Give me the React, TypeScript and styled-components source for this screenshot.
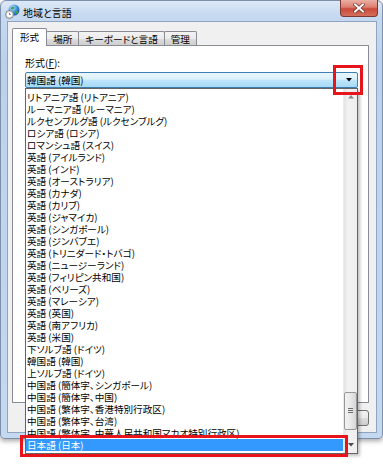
import React from 'react';
import styled, { createGlobalStyle } from 'styled-components';

const GlobalStyle = createGlobalStyle`
  html, body {
    margin: 0;
    padding: 0;
    background: #ffffff;
  }
  body {
    font-family: "Noto Sans CJK JP", "Noto Sans", sans-serif;
    font-feature-settings: "palt";
    color: #000;
  }
`;

const Page = styled.div`
  position: relative;
  width: 383px;
  height: 464px;
  overflow: hidden;
  background: #fff;
`;

const Window = styled.div`
  width: 383px;
  height: 439px;
  box-sizing: border-box;
  border: 1px solid #7d90ab;
  border-radius: 6px 6px 4px 4px;
  background: linear-gradient(180deg, #dce8f6 0px, #c6d9f0 14px, #bcd2ec 60px, #c4d8ef 100%);
  box-shadow: 0 2px 5px rgba(0, 0, 0, 0.35);
  display: flex;
  flex-direction: column;
`;

const TitleBar = styled.div`
  height: 20px;
  display: flex;
  align-items: center;
  padding-left: 4px;
  gap: 3px;
`;

const Title = styled.span`
  font-size: 10px;
  line-height: 12px;
  margin-top: 3px;
`;

const CloseButton = styled.div`
  margin-left: auto;
  margin-right: 4px;
  align-self: flex-start;
  margin-top: -1px;
  width: 38px;
  height: 17px;
  box-sizing: border-box;
  border: 1px solid #7a3a32;
  border-top: none;
  border-radius: 0 0 4px 4px;
  background: linear-gradient(180deg, #eab0a4 0%, #dc7d6f 45%, #c9493a 55%, #d4705c 100%);
  display: flex;
  align-items: center;
  justify-content: center;
`;

const Client = styled.div`
  flex: 1;
  margin: 0 5px 5px 6px;
  border: 1px solid #8fa4c2;
  background: #f0f0f0;
  padding: 6px 7px 0 4px;
  display: flex;
  flex-direction: column;
`;

const TabRow = styled.div`
  display: flex;
  align-items: flex-end;
  height: 18px;
  margin-bottom: -1px;
  position: relative;
  z-index: 1;
`;

const Tab = styled.div<{ $active?: boolean }>`
  box-sizing: border-box;
  font-size: 9.6px;
  line-height: 12px;
  white-space: nowrap;
  border: 1px solid #898c95;
  border-bottom: none;
  border-radius: 2px 2px 0 0;
  margin-left: ${(p) => (p.$active ? '0' : '-1px')};
  height: ${(p) => (p.$active ? '18px' : '14px')};
  margin-bottom: ${(p) => (p.$active ? '0' : '1px')};
  padding: ${(p) => (p.$active ? '2px 7px 0' : '1px 6px 0')};
  background: ${(p) =>
    p.$active ? '#ffffff' : 'linear-gradient(180deg, #f3f3f3 0%, #ebebeb 50%, #dddddd 51%, #cfcfcf 100%)'};
  position: relative;
  z-index: ${(p) => (p.$active ? 2 : 1)};
  &:first-child {
    margin-left: 0;
  }
`;

const Panel = styled.div`
  height: 358px;
  box-sizing: border-box;
  border: 1px solid #898c95;
  background: #ffffff;
  padding: 11px 11px 0 12px;
`;

const Label = styled.div`
  font-size: 10px;
  line-height: 12px;
  height: 12px;
  margin-bottom: 3px;
  u {
    text-decoration: underline;
  }
`;

const ComboWrap = styled.div`
  position: relative;
  width: 333px;
  height: 16px;
`;

const Combo = styled.div`
  height: 16px;
  box-sizing: border-box;
  border: 1px solid #3c7fb1;
  border-radius: 2px;
  background: linear-gradient(180deg, #eaf6fd 0%, #d9f0fc 45%, #bee6fd 50%, #a7d9f5 100%);
  display: flex;
  align-items: center;
  padding-left: 1px;
  font-size: 9.6px;
  line-height: 12px;
`;

const ComboArrow = styled.div`
  margin-left: auto;
  width: 17px;
  height: 100%;
  display: flex;
  align-items: center;
  justify-content: center;
`;

const DropList = styled.div`
  position: absolute;
  top: 16px;
  left: 0;
  width: 333px;
  height: 366px;
  box-sizing: border-box;
  border: 1px solid #646464;
  background: #ffffff;
  display: flex;
  z-index: 5;
  box-shadow: 2px 2px 3px rgba(0, 0, 0, 0.25);
`;

const Items = styled.div`
  flex: 1;
  padding-top: 2px;
  overflow: hidden;
`;

const Item = styled.div<{ $selected?: boolean }>`
  height: 12px;
  line-height: 12px;
  padding-left: 1px;
  font-size: 9.6px;
  white-space: nowrap;
  overflow: hidden;
  background: ${(p) => (p.$selected ? '#3399ff' : 'transparent')};
  color: ${(p) => (p.$selected ? '#ffffff' : '#000000')};
`;

const ScrollBar = styled.div`
  width: 13px;
  display: flex;
  flex-direction: column;
  background: linear-gradient(90deg, #e3e3e3 0%, #f2f2f2 30%, #eeeeee 100%);
  border-left: 1px solid #ececec;
`;

const ScrollArrow = styled.div`
  height: 16px;
  display: flex;
  align-items: center;
  justify-content: center;
`;

const Track = styled.div`
  flex: 1;
  display: flex;
  flex-direction: column;
  justify-content: flex-end;
  padding-bottom: 7px;
`;

const Thumb = styled.div`
  height: 38px;
  box-sizing: border-box;
  border: 1px solid #979797;
  border-radius: 2px;
  background: linear-gradient(90deg, #f3f3f3 0%, #e8e8e8 50%, #d6d6d6 100%);
  display: flex;
  align-items: center;
  justify-content: center;
`;

const ButtonRow = styled.div`
  display: flex;
  justify-content: flex-end;
  gap: 6px;
  margin-top: 7px;
`;

const DialogButton = styled.div`
  width: 56px;
  height: 16px;
  box-sizing: border-box;
  border: 1px solid #707070;
  border-radius: 3px;
  background: linear-gradient(180deg, #f2f2f2 0%, #ebebeb 50%, #dddddd 51%, #cfcfcf 100%);
  font-size: 9.5px;
  line-height: 14px;
  text-align: center;
`;

const RedBox = styled.div<{ $x: number; $y: number; $w: number; $h: number }>`
  position: absolute;
  left: ${(p) => p.$x}px;
  top: ${(p) => p.$y}px;
  width: ${(p) => p.$w}px;
  height: ${(p) => p.$h}px;
  box-sizing: border-box;
  border: 3px solid #e8141c;
  z-index: 10;
  pointer-events: none;
`;

const items = [
  'リトアニア語 (リトアニア)',
  'ルーマニア語 (ルーマニア)',
  'ルクセンブルグ語 (ルクセンブルグ)',
  'ロシア語 (ロシア)',
  'ロマンシュ語 (スイス)',
  '英語 (アイルランド)',
  '英語 (インド)',
  '英語 (オーストラリア)',
  '英語 (カナダ)',
  '英語 (カリブ)',
  '英語 (ジャマイカ)',
  '英語 (シンガポール)',
  '英語 (ジンバブエ)',
  '英語 (トリニダード・トバゴ)',
  '英語 (ニュージーランド)',
  '英語 (フィリピン共和国)',
  '英語 (ベリーズ)',
  '英語 (マレーシア)',
  '英語 (英国)',
  '英語 (南アフリカ)',
  '英語 (米国)',
  '下ソルブ語 (ドイツ)',
  '韓国語 (韓国)',
  '上ソルブ語 (ドイツ)',
  '中国語 (簡体字、シンガポール)',
  '中国語 (簡体字、中国)',
  '中国語 (繁体字、香港特別行政区)',
  '中国語 (繁体字、台湾)',
  '中国語 (繁体字、中華人民共和国マカオ特別行政区)',
  '日本語 (日本)',
];

const GlobeIcon = () => (
  <svg width="15" height="15" viewBox="0 0 15 15">
    <defs>
      <radialGradient id="globe" cx="0.35" cy="0.3" r="0.8">
        <stop offset="0" stopColor="#bfe4ff" />
        <stop offset="0.6" stopColor="#2f86d6" />
        <stop offset="1" stopColor="#164f94" />
      </radialGradient>
    </defs>
    <circle cx="9" cy="6" r="5.5" fill="url(#globe)" />
    <path d="M6 3.5 Q8 2 9.5 3.5 Q9 5.5 7 5.5 Q5.5 5 6 3.5Z M10 7 Q12.5 6.5 13.5 8 Q12 10.5 10.5 10 Q9.5 8.5 10 7Z" fill="#3aa53a" />
    <circle cx="4.5" cy="10.5" r="4" fill="#d8d8d8" stroke="#7a7a7a" strokeWidth="0.8" />
    <circle cx="4.5" cy="10.5" r="2.6" fill="#ffffff" />
    <path d="M4.5 8.8 V10.5 H5.8" stroke="#444" strokeWidth="0.7" fill="none" />
  </svg>
);

const CloseGlyph = () => (
  <svg width="12" height="10" viewBox="0 0 12 10">
    <path d="M2 1.5 L10 8.5 M10 1.5 L2 8.5" stroke="#6b2a22" strokeWidth="3.4" strokeLinecap="square" />
    <path d="M2 1.5 L10 8.5 M10 1.5 L2 8.5" stroke="#ffffff" strokeWidth="2" strokeLinecap="square" />
  </svg>
);

const DownTriangle = ({ color = '#000' }: { color?: string }) => (
  <svg width="6" height="4" viewBox="0 0 6 4">
    <polygon points="0,0 6,0 3,3.5" fill={color} />
  </svg>
);

const UpTriangle = ({ color = '#000' }: { color?: string }) => (
  <svg width="6" height="4" viewBox="0 0 6 4">
    <polygon points="0,3.5 6,3.5 3,0" fill={color} />
  </svg>
);

const Grip = () => (
  <svg width="5" height="6" viewBox="0 0 5 6">
    <path d="M0 0.5 H5 M0 2.5 H5 M0 4.5 H5" stroke="#6d6d6d" strokeWidth="1" />
  </svg>
);

const App: React.FC = () => {
  const selected = items.length - 1;

  return (
    <>
      <GlobalStyle />
      <Page>
        <Window>
          <TitleBar>
            <GlobeIcon />
            <Title>地域と言語</Title>
            <CloseButton>
              <CloseGlyph />
            </CloseButton>
          </TitleBar>
          <Client>
            <TabRow>
              <Tab $active>形式</Tab>
              <Tab>場所</Tab>
              <Tab>キーボードと言語</Tab>
              <Tab>管理</Tab>
            </TabRow>
            <Panel>
              <Label>
                形式(<u>F</u>):
              </Label>
              <ComboWrap>
                <Combo>
                  韓国語 (韓国)
                  <ComboArrow>
                    <DownTriangle />
                  </ComboArrow>
                </Combo>
                <DropList>
                  <Items>
                    {items.map((item, index) => (
                      <Item key={index} $selected={index === selected}>
                        {item}
                      </Item>
                    ))}
                  </Items>
                  <ScrollBar>
                    <ScrollArrow>
                      <UpTriangle color="#8a8a8a" />
                    </ScrollArrow>
                    <Track>
                      <Thumb>
                        <Grip />
                      </Thumb>
                    </Track>
                    <ScrollArrow>
                      <DownTriangle color="#4a4a4a" />
                    </ScrollArrow>
                  </ScrollBar>
                </DropList>
              </ComboWrap>
            </Panel>
            <ButtonRow>
              <DialogButton>OK</DialogButton>
              <DialogButton>キャンセル</DialogButton>
              <DialogButton>適用(A)</DialogButton>
            </ButtonRow>
          </Client>
        </Window>
        <RedBox $x={333} $y={65} $w={30} $h={30} />
        <RedBox $x={20} $y={435} $w={328} $h={22} />
      </Page>
    </>
  );
};

export default App;
